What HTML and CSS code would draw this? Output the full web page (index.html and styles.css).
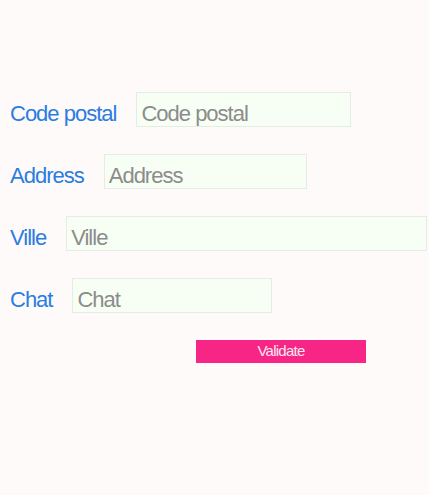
FILE: index.html
```html
<!DOCTYPE html>
<html>
<head>
<meta charset="utf-8">
<link rel="stylesheet" href="styles.css">
</head>
<body>
<form class="form">
  <div class="row"><label class="label">Code postal</label><input class="field w-code" placeholder="Code postal"></div>
  <div class="row"><label class="label">Address</label><input class="field w-address" placeholder="Address"></div>
  <div class="row"><label class="label">Ville</label><input class="field w-ville" placeholder="Ville"></div>
  <div class="row"><label class="label">Chat</label><input class="field w-chat" placeholder="Chat"></div>
  <div class="actions"><button type="button" class="btn">Validate</button></div>
</form>
</body>
</html>
```
FILE: styles.css
```css
html, body {
  margin: 0;
  background: #fffafa;
}
body {
  padding: 92px 0 0 10px;
  font-family: "Liberation Sans", Arial, sans-serif;
}
.form {
  display: flex;
  flex-direction: column;
  gap: 27px;
}
.row {
  display: flex;
  align-items: baseline;
  gap: 20px;
  height: 35px;
}
.label {
  color: #2a7de1;
  font-size: 22px;
  letter-spacing: -1px;
}
.field {
  box-sizing: border-box;
  height: 35px;
  border: 1px solid #e6ebe6;
  background: #f7fff5;
  font-family: "Liberation Sans", Arial, sans-serif;
  font-size: 22px;
  letter-spacing: -1px;
  padding: 9px 4px 0;
  outline: none;
  color: #333;
}
.field::placeholder {
  color: #8c8c8c;
}
.w-code { width: 215px; }
.w-address { width: 203px; }
.w-ville { width: 361px; }
.w-chat { width: 200px; }
.actions {
  padding-left: 186px;
}
.btn {
  width: 170px;
  height: 23px;
  border: none;
  background: #f72585;
  color: #fde8f0;
  font-family: "Liberation Sans", Arial, sans-serif;
  font-size: 15px;
  letter-spacing: -0.75px;
  padding: 0 0 2px;
}
```
